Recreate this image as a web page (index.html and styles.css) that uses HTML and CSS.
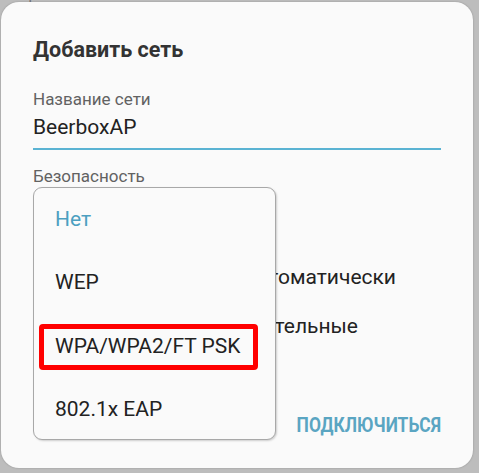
FILE: index.html
```html
<!DOCTYPE html>
<html lang="ru">
<head>
<meta charset="utf-8">
<title>Добавить сеть</title>
<link rel="stylesheet" href="styles.css">
</head>
<body>
<div class="screen">
  <div class="peek"><span>Сохранённые сети</span></div>
  <div class="dialog">
    <h2 class="title">Добавить сеть</h2>
    <div class="field">
      <div class="label">Название сети</div>
      <div class="input">BeerboxAP</div>
    </div>
    <div class="field">
      <div class="label">Безопасность</div>
      <div class="select"></div>
    </div>
    <div class="rows">
      <div class="row row-auto">Подключаться автоматически</div>
      <div class="row row-adv">Дополнительные</div>
    </div>
    <div class="actions">
      <button class="btn">ПОДКЛЮЧИТЬСЯ</button>
    </div>
    <ul class="menu">
      <li class="item selected">Нет</li>
      <li class="item">WEP</li>
      <li class="item marked">WPA/WPA2/FT PSK</li>
      <li class="item">802.1x EAP</li>
    </ul>
  </div>
</div>
</body>
</html>
```
FILE: styles.css
```css
*, *::before, *::after { box-sizing: border-box; }
html, body { margin: 0; padding: 0; }
body {
  background: #bdbdbd;
  font-family: Roboto, "Noto Sans", "Liberation Sans", sans-serif;
  width: 479px;
  height: 473px;
  overflow: hidden;
}
.screen {
  padding: 0 6px 5px 1px;
}
.peek {
  height: 2px;
  overflow: hidden;
  padding-left: 2px;
}
.peek span {
  display: block;
  margin-top: -13px;
  font-size: 15px;
  line-height: 15px;
  color: #777;
}
.dialog {
  position: relative;
  height: 466px;
  background: #fafafa;
  border-radius: 18px;
  padding: 34px 32px 0 32px;
  box-shadow: 0 0 2px rgba(0,0,0,0.25);
}
.title {
  margin: 0;
  font-size: 21.5px;
  line-height: 28px;
  font-weight: 700;
  color: #333;
}
.field { display: flex; flex-direction: column; }
.label {
  font-size: 17px;
  line-height: 20px;
  color: #626262;
}
.title + .field { margin-top: 25px; }
.input {
  margin-top: 4px;
  font-size: 21px;
  line-height: 28px;
  color: #222;
  padding-bottom: 7px;
  border-bottom: 2px solid #5ab3d3;
}
.field + .field { margin-top: 16px; }
.select {
  height: 67px;
}
.rows { display: flex; flex-direction: column; }
.row {
  height: 49px;
  line-height: 49px;
  font-size: 21px;
  color: #222;
  text-align: right;
  white-space: nowrap;
}
.row-auto { padding-right: 45px; }
.row-adv { padding-right: 83px; }
.actions {
  margin-top: 50px;
  display: flex;
  justify-content: flex-end;
}
.btn {
  height: 48px;
  border: 0;
  background: none;
  padding: 0;
  font-family: Roboto, "Noto Sans", sans-serif;
  font-weight: 700;
  font-size: 20px;
  color: #5aa5c2;
  transform: scaleX(0.87);
  transform-origin: right center;
}
.menu {
  position: absolute;
  left: 32px;
  top: 185px;
  width: 243px;
  height: 253px;
  margin: 0;
  padding: 0;
  list-style: none;
  background: #fafafa;
  border: 1px solid #a8a8a8;
  border-radius: 9px;
  box-shadow: 1px 1px 2px rgba(0,0,0,0.18);
}
.item {
  position: relative;
  height: 63.4px;
  line-height: 63.4px;
  padding-left: 21px;
  font-size: 21px;
  color: #222;
}
.item.selected { color: #4c9fc0; }
.item.marked::after {
  content: "";
  position: absolute;
  left: 5px;
  top: 9px;
  width: 219px;
  height: 46px;
  border: 5px solid #ff0000;
  border-radius: 4px;
}
```
